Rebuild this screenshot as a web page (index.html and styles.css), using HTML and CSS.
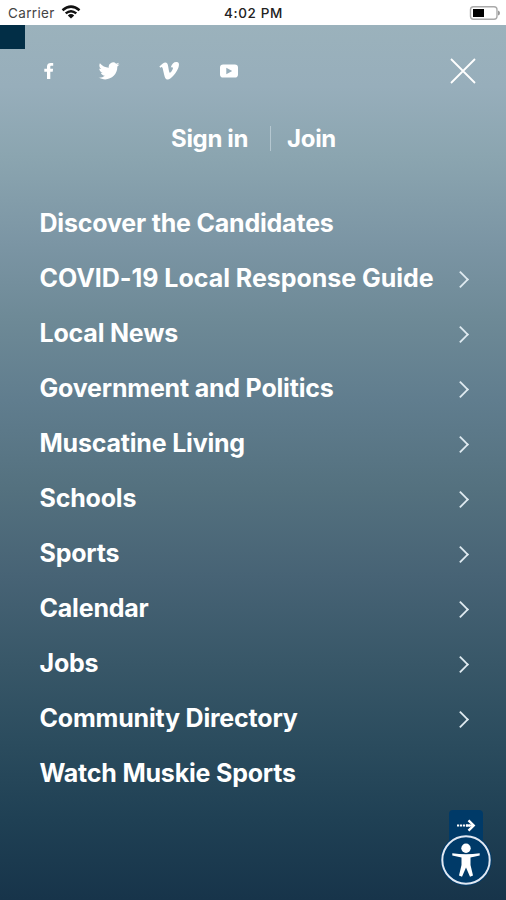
FILE: index.html
```html
<!DOCTYPE html>
<html lang="en">
<head>
<meta charset="utf-8">
<title>Menu</title>
<link rel="stylesheet" href="styles.css">
</head>
<body>
<header class="status">
  <div class="carrier"><span>Carrier</span>
    <svg width="20" height="14" viewBox="0 0 20 14" fill="none" stroke="#111" stroke-width="2.5"><path d="M1.5 5.2Q10-2 18.500 5.200M4.700 8.400Q10 4 15.300 8.400"/><path d="M10 13.500L6.800 10.500Q10 7.700 13.200 10.500Z" fill="#111" stroke="none"/></svg>
  </div>
  <time>4:02 PM</time>
  <svg class="battery" width="32" height="16" viewBox="0 0 32 16"><rect x="1.500" y="1.700" width="26.500" height="12.600" rx="3" fill="#fff" stroke="#aaa" stroke-width="1.400"/><rect x="4" y="4" width="11" height="8" fill="#000"/><path d="M29 5.500Q31 6 31 8T29 10.500Z" fill="#999"/></svg>
</header>
<main class="menu">
  <div class="corner"></div>
  <div class="top">
    <nav class="social">
      <a><svg width="20" height="20" viewBox="0 0 20 20"><path d="M8 18V10.700H5.300V7.700H8V5.600C8 3.100 9.600 2 11.700 2H14.200V4.700H12.600C11.500 4.700 11.300 5.200 11.300 6V7.700H14.100L13.700 10.700H11.300V18Z"/></svg></a>
      <a><svg width="22" height="20" viewBox="0 0 24 20"><path d="M23.500 2.700c-.8.400-1.700.7-2.700.8 1-.6 1.600-1.400 2-2.500-.9.500-1.900.9-3 1.100a4.700 4.700 0 0 0-8 4.300C7.900 6.200 4.500 4.400 2.100 1.500c-1.200 2.200-.6 4.900 1.500 6.300-.8 0-1.500-.2-2.200-.6 0 2.300 1.600 4.200 3.800 4.700-.7.200-1.400.2-2.100.1.600 1.900 2.300 3.200 4.400 3.200A9.500 9.500 0 0 1 .5 17.200c10.100 5.500 20.800-1.200 20.600-12 .9-.7 1.700-1.500 2.400-2.500Z"/></svg></a>
      <a><svg width="20" height="20" viewBox="0 0 20 20"><path d="M.4 5.500C2.300 3.900 4.200 1.700 6 1.600c2-.2 2.800 1.300 3.200 3.800.7 4.300 1 6.400 1.800 6.400.8 0 2.800-3.100 2.900-4.200.1-1.400-1-1.500-2.200-1C12.800 2.500 15 .7 17.900 1c2 .2 2.500 1.800 1.700 4.900-1.100 4.300-7.500 12.600-10.900 12.600-2.500 0-3-2.700-4-6.800-.8-3.300-1.100-5.700-2-5.700-.4 0-.8.300-1.400.8Z"/></svg></a>
      <a><svg width="20" height="20" viewBox="0 0 20 20"><path fill-rule="evenodd" d="M4.200 3.400H15.800Q19 3.400 19 6.500V13.500Q19 16.600 15.800 16.600H4.200Q1 16.600 1 13.500V6.500Q1 3.400 4.200 3.400ZM7.300 6.700V13.300L13.200 10Z"/></svg></a>
    </nav>
    <svg class="close" width="28" height="28" viewBox="0 0 28 28" fill="none" stroke="#fff" stroke-width="1.800"><path d="M2 2L26 26M26 2L2 26"/></svg>
  </div>
  <div class="account"><a class="signin">Sign in</a><i></i><a class="join">Join</a></div>
  <ul class="links">
    <li><span>Discover the Candidates</span></li>
    <li class="more wide"><span>COVID-19 Local Response Guide</span></li>
    <li class="more"><span>Local News</span></li>
    <li class="more"><span>Government and Politics</span></li>
    <li class="more"><span>Muscatine Living</span></li>
    <li class="more"><span>Schools</span></li>
    <li class="more"><span>Sports</span></li>
    <li class="more"><span>Calendar</span></li>
    <li class="more"><span>Jobs</span></li>
    <li class="more"><span>Community Directory</span></li>
    <li><span>Watch Muskie Sports</span></li>
  </ul>
  <div class="access">
    <svg width="52" height="80" viewBox="0 0 52 80"><rect x="9" y="0" width="34" height="50" rx="4" fill="#003a68"/><path d="M17 15.500H30" stroke="#fff" stroke-width="2.200" stroke-dasharray="2.200 .8"/><path d="M28.500 10.300L33.700 15.500L28.500 20.700" fill="none" stroke="#fff" stroke-width="2.400"/><path d="M26 15.500H33" stroke="#fff" stroke-width="2.200"/><circle cx="26" cy="50" r="25.800" fill="#003a68"/><circle cx="26" cy="50" r="23.700" fill="#003a68" stroke="#e1e8f3" stroke-width="2"/><circle cx="26" cy="38.300" r="4.700" fill="#fff"/><path d="M12.300 43.200Q26 45.400 39.700 43.200V45.600L30.500 47.400V55L33 65.500L30 66.800L26 57.500L22 66.800L19 65.500L21.500 55V47.400L12.300 45.600Z" fill="#fff"/></svg>
  </div>
</main>
</body>
</html>
```
FILE: styles.css
```css
* { box-sizing: border-box; }
body { margin: 0; width: 506px; height: 900px; overflow: hidden; font-family: Inter, "Liberation Sans", sans-serif; color: #fff; display: flex; flex-direction: column; }
.status { height: 25px; background: #fff; color: #222; display: grid; grid-template-columns: 1fr auto 1fr; align-items: center; padding: 1px 5px 0 8px; font-size: 13.5px; }
.carrier { display: flex; align-items: center; gap: 6px; letter-spacing: .35px; color: #444; }
.carrier svg { margin-top: -2px; }
.status time { font-weight: 500; font-size: 13.5px; letter-spacing: .65px; margin-right: 2px; }
.battery { justify-self: end; }
.menu { position: relative; flex: 1; background: linear-gradient(#9bb2bc 0, #97aebb 7%, #8ba5b0 15%, #7b95a4 25%, #6d8996 34%, #607d8e 43%, #54717f 53%, #476375 63%, #385768 73%, #2b4c5e 82%, #1f4054 91%, #17344a 100%); }
.corner { position: absolute; left: 0; top: 0; width: 25px; height: 24px; background: #022e46; }
.top { height: 92px; padding: 0 29px 0 39px; display: flex; justify-content: space-between; align-items: center; }
.social { display: flex; gap: 40px; }
.social a { width: 20px; display: flex; justify-content: center; }
.social svg { fill: #fff; flex: none; }
.close { margin-top: -1px; }
.account { height: 42px; display: flex; align-items: center; justify-content: center; font-weight: 700; font-size: 24px; letter-spacing: -.35px; padding-left: 1px; }
.account i { width: 1px; height: 25px; background: #b5c7d0; margin: 0 16px 0 22px; }
.links { list-style: none; margin: 36px 0 0; padding: 0 38px 0 39.5px; font-size: 25px; font-weight: 700; letter-spacing: -.2px; }
.links li { height: 55px; display: flex; align-items: center; justify-content: space-between; white-space: nowrap; }
.links .wide { letter-spacing: -.03px; }
.more::after { content: ""; width: 11px; height: 11px; border: solid #dfeaf0; border-width: 1.8px 1.8px 0 0; border-width: 2px 2px 0 0; transform: rotate(45deg) scale(.92); margin: 3px 1px 0 0; }
.access { position: absolute; left: 440px; top: 785px; }
.access svg { display: block; }
```
